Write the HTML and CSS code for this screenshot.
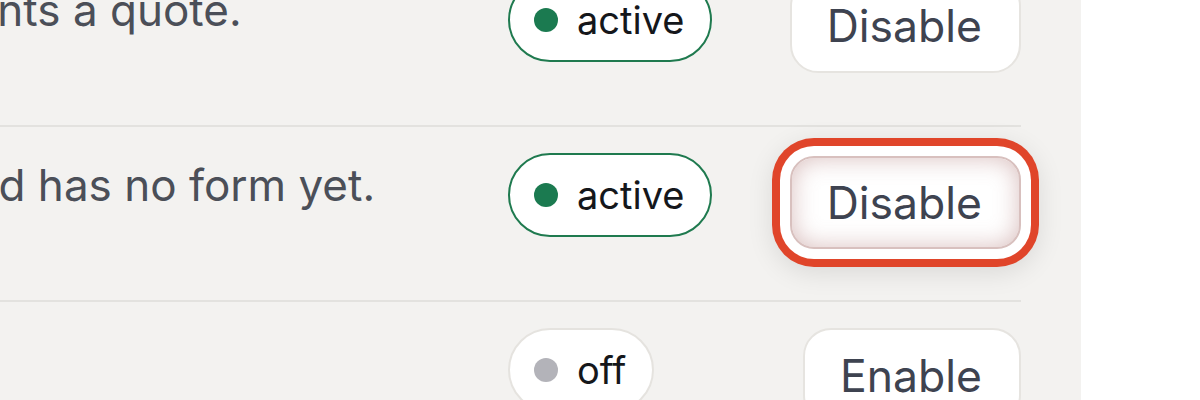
FILE: index.html
```html
<!DOCTYPE html>
<html lang="en">
<head>
<meta charset="utf-8">
<title>Forms</title>
<link rel="stylesheet" href="styles.css">
</head>
<body>
<div class="page">
  <section class="panel">
    <div class="list">
      <div class="row">
        <div class="info"><p class="desc">Sent when a client wants a quote.</p></div>
        <div class="status"><span class="badge badge-active"><span class="dot"></span>active</span></div>
        <div class="action"><button class="btn" type="button">Disable</button></div>
      </div>
      <div class="row">
        <div class="info"><p class="desc">Booking tab is new and has no form yet.</p></div>
        <div class="status"><span class="badge badge-active"><span class="dot"></span>active</span></div>
        <div class="action"><button class="btn btn-focus" type="button">Disable</button></div>
      </div>
      <div class="row">
        <div class="info"><p class="desc"></p></div>
        <div class="status"><span class="badge badge-off"><span class="dot"></span>off</span></div>
        <div class="action"><button class="btn" type="button">Enable</button></div>
      </div>
    </div>
  </section>
  <div class="rest"></div>
</div>
</body>
</html>
```
FILE: styles.css
```css
html, body {
  margin: 0;
  padding: 0;
  background: #ffffff;
  font-family: Inter, "Noto Sans", sans-serif;
  overflow: hidden;
}

.page {
  display: flex;
  height: 400px;
  overflow: hidden;
}

.panel {
  flex: 0 0 1081px;
  background: #f3f2f0;
  overflow: hidden;
}

.rest {
  flex: 1;
  background: #ffffff;
}

.list {
  margin-left: -458px;
  margin-top: -48px;
  margin-right: 60px;
}

.row {
  display: flex;
  align-items: flex-start;
  padding: 26px 0 52px;
  height: 95px;
}

.row + .row {
  border-top: 2px solid #e3e2df;
}

.info {
  flex: 1;
  min-width: 0;
}

.desc {
  margin: 1px 0 0;
  font-size: 44px;
  line-height: 63px;
  color: #4b4f58;
  white-space: nowrap;
}

.status {
  flex: 0 0 263px;
  display: flex;
  justify-content: flex-start;
}

.action {
  flex: 0 0 250px;
  display: flex;
  justify-content: flex-end;
}

.badge {
  display: inline-flex;
  align-items: center;
  gap: 19px;
  box-sizing: border-box;
  height: 84px;
  padding: 0 26px 0 24px;
  border-radius: 42px;
  background: #ffffff;
  border: 2.5px solid #e5e3df;
  font-size: 38px;
  line-height: 46px;
  color: #15171b;
}

.dot {
  width: 24px;
  height: 24px;
  border-radius: 50%;
  flex: 0 0 auto;
}

.badge-active {
  border-color: #1f7a4f;
}

.badge-active .dot {
  background: #1b7a50;
}

.badge-off .dot {
  background: #b3b3b9;
}

.btn {
  box-sizing: border-box;
  height: 95px;
  padding: 0 37px 0 35px;
  border: 2px solid #e6e4e0;
  border-radius: 28px;
  background: #ffffff;
  font-family: Inter, "Noto Sans", sans-serif;
  font-size: 44.5px;
  line-height: 52px;
  color: #3e4350;
  cursor: pointer;
}

.btn-focus {
  height: 93px;
  margin-top: 3px;
  border-color: #d8c0be;
  border-radius: 24px;
  box-shadow:
    inset 0 0 24px rgba(170, 110, 108, 0.45),
    0 0 0 10px #ffffff,
    0 0 0 18px #e0452a,
    0 6px 26px 18px rgba(0, 0, 0, 0.10);
}
```
